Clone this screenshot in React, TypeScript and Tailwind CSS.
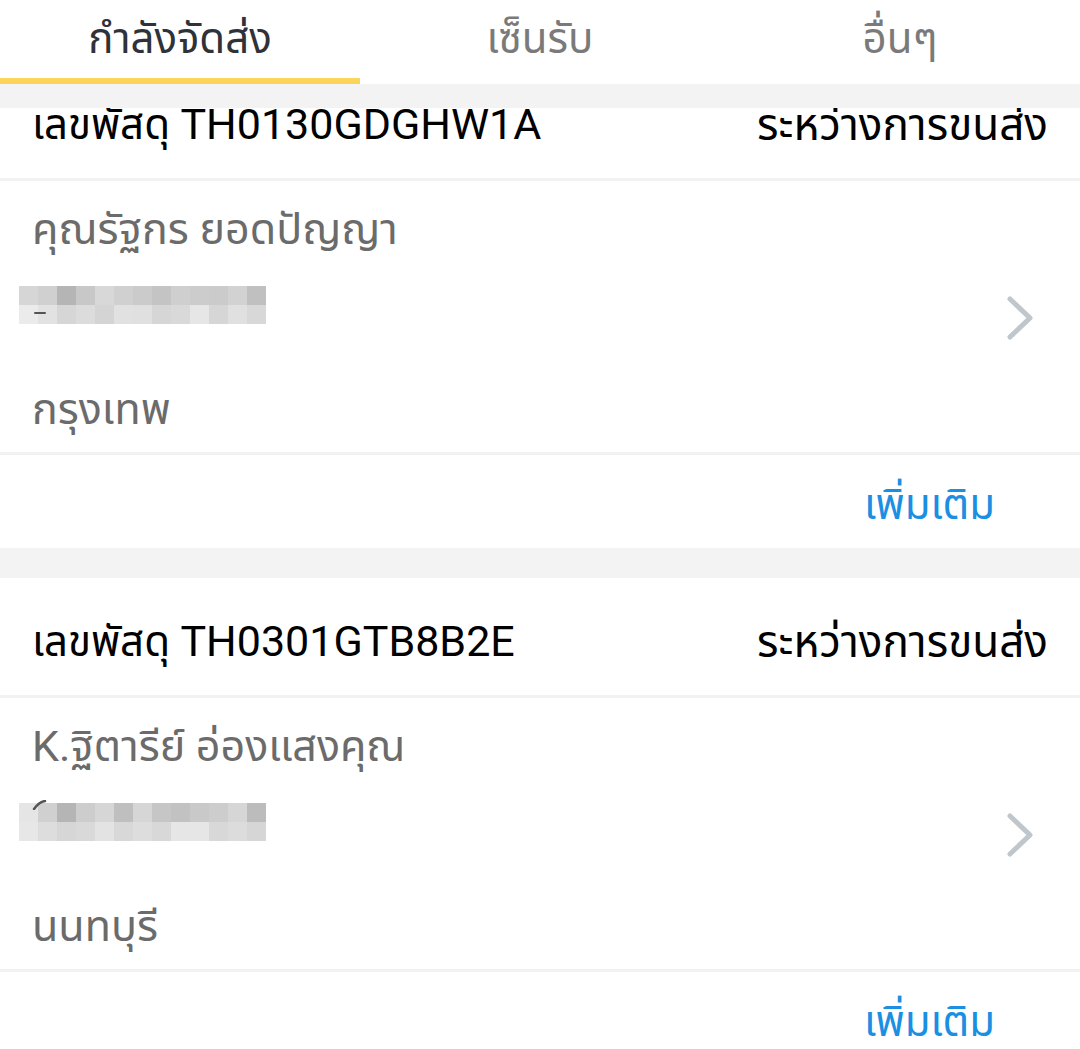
import React from "react";

const FONT = { fontFamily: "Roboto, 'Noto Sans Thai', 'Noto Sans', 'DejaVu Sans', sans-serif" };

type Parcel = {
  id: string;
  status: string;
  name: string;
  city: string;
  rows: string[][];
  mark: "dash" | "curve";
};

const parcels: Parcel[] = [
  {
    id: "TH0130GDGHW1A",
    status: "ระหว่างการขนส่ง",
    name: "คุณรัฐกร ยอดปัญญา",
    city: "กรุงเทพ",
    mark: "dash",
    rows: [
      ["#d6d6d6", "#d0d0d0", "#b5b5b5", "#c8c8c8", "#d8d8d8", "#d0d0d0", "#cbcbcb", "#c4c4c4", "#cfcfcf", "#cccccc", "#cbcbcb", "#d2d2d2", "#c0c0c0"],
      ["#ebebeb", "#e2e2e2", "#d6d6d6", "#dcdcdc", "#d4d4d4", "#e1e1e1", "#e0e0e0", "#d6d6d6", "#d9d9d9", "#e6e6e6", "#d6d6d6", "#e0e0e0", "#d8d8d8"],
    ],
  },
  {
    id: "TH0301GTB8B2E",
    status: "ระหว่างการขนส่ง",
    name: "K.ฐิตารีย์ อ่องแสงคุณ",
    city: "นนทบุรี",
    mark: "curve",
    rows: [
      ["#e5e5e5", "#d0d0d0", "#b5b5b5", "#cdcdcd", "#d6d6d6", "#bfbfbf", "#d6d6d6", "#c6c6c6", "#c2c2c2", "#c9c9c9", "#cdcdcd", "#d6d6d6", "#bcbcbc"],
      ["#e7e7e7", "#dddddd", "#d6d6d6", "#d9d9d9", "#e3e3e3", "#d8d8d8", "#dddddd", "#d8d8d8", "#e6e6e6", "#e6e6e6", "#d8d8d8", "#dcdcdc", "#d6d6d6"],
    ],
  },
];

function Pixelated({ rows, mark }: { rows: string[][]; mark: "dash" | "curve" }) {
  return (
    <div className="relative ml-[-13px] w-[247px]">
      {rows.map((r, i) => (
        <div key={i} className="flex">
          {r.map((c, j) => (
            <div key={j} className="h-[19px] w-[19px]" style={{ backgroundColor: c }} />
          ))}
        </div>
      ))}
      {mark === "dash" ? (
        <div className="absolute left-[15px] top-[26px] h-[2px] w-[12px] rounded-full bg-[#555]" />
      ) : (
        <svg className="absolute left-[12px] top-[-3px]" width="24" height="10" viewBox="0 0 24 10">
          <path d="M3 9 Q8 2 14 1" stroke="#555" strokeWidth="2.5" fill="none" strokeLinecap="round" />
        </svg>
      )}
    </div>
  );
}

function Card({ p, cropTop }: { p: Parcel; cropTop?: boolean }) {
  return (
    <div className="bg-white">
      <div
        className={
          "flex h-[120px] items-center justify-between border-b-[3px] border-[#f2f2f2] pl-8 pr-8 pt-[10px] text-black " +
          (cropTop ? "mt-[-47px]" : "")
        }
      >
        <span className="text-[42px]">
          เลขพัสดุ <span className="text-[43px]">{p.id}</span>
        </span>
        <span className="text-[44px]">{p.status}</span>
      </div>
      <div className="flex h-[274px] items-center border-b-[3px] border-[#f2f2f2]">
        <div className="flex h-full flex-1 flex-col pl-8 pt-[23px] text-[43px] text-[#6b6b6b]">
          <div className="leading-[50px]">{p.name}</div>
          <div className="mt-[32px]">
            <Pixelated rows={p.rows} mark={p.mark} />
          </div>
          <div className="mt-[60px] leading-[50px]">{p.city}</div>
        </div>
        <div className="mr-[45px] flex items-center pt-[2px]">
          <svg width="30" height="46" viewBox="0 0 30 46">
            <path d="M5 4 L25 23 L5 42" stroke="#bfc6cc" strokeWidth="5" fill="none" strokeLinecap="round" strokeLinejoin="round" />
          </svg>
        </div>
      </div>
      <div className="flex h-[93px] items-center justify-end pr-[85px] pt-[6px] text-[42px] text-[#1b8fe2]">
        เพิ่มเติม
      </div>
    </div>
  );
}

export default function App() {
  const tabs = ["กำลังจัดส่ง", "เซ็นรับ", "อื่นๆ"];
  return (
    <div className="h-[1049px] w-[1080px] overflow-hidden bg-[#f3f3f3]" style={FONT}>
      <div className="flex h-[84px] bg-white">
        {tabs.map((t, i) => (
          <div key={t} className="relative flex flex-1 flex-col items-center">
            <div
              className={
                "flex h-[78px] items-center pb-[2px] text-[42px] " + (i === 0 ? "text-[#2f3238]" : "text-[#7a7a7a]")
              }
            >
              {t}
            </div>
            <div className={"h-[6px] w-full " + (i === 0 ? "bg-[#fbd55a]" : "bg-white")} />
          </div>
        ))}
      </div>
      <div className="mt-[24px] overflow-hidden">
        <Card p={parcels[0]} cropTop />
        <div className="h-[30px]" />
        <Card p={parcels[1]} />
      </div>
    </div>
  );
}
